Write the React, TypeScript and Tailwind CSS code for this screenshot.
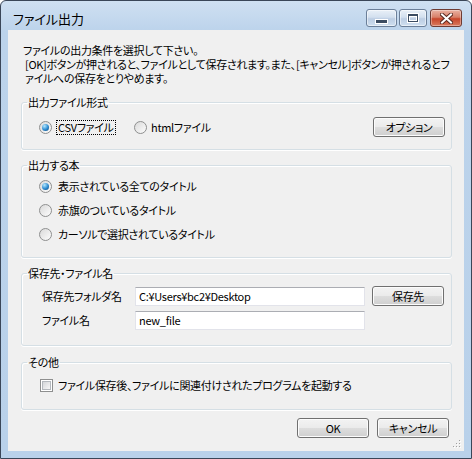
import React from 'react';

const jp = "font-['Noto_Sans_CJK_JP',sans-serif] [font-feature-settings:'palt']";

function Radio({ checked = false }: { checked?: boolean }) {
  return (
    <span className="flex h-[13px] w-[13px] shrink-0 items-center justify-center rounded-full border border-[#8e8f8f] bg-[linear-gradient(135deg,#d9d9d9,#fdfdfd)]">
      {checked && (
        <span className="h-[7px] w-[7px] rounded-full bg-[radial-gradient(circle_at_35%_30%,#b4e8ff,#2b8ad0_55%,#0c3f6e)]" />
      )}
    </span>
  );
}

function Checkbox() {
  return (
    <span className="flex h-[13px] w-[13px] shrink-0 items-center justify-center border border-[#8e8f8f] bg-white">
      <span className="h-[9px] w-[9px] border border-[#b4b8bd] bg-[linear-gradient(135deg,#d4d6d9,#f7f7f7)]" />
    </span>
  );
}

function Btn({ children }: { children: React.ReactNode }) {
  return (
    <button className="flex h-[20px] w-[72px] shrink-0 items-center justify-center rounded-[3px] border border-[#707070] bg-[linear-gradient(#f3f3f3_0%,#ebebeb_48%,#dddddd_52%,#cfcfcf_100%)] text-[11px] leading-none tracking-[-0.3px] text-black shadow-[inset_0_0_0_1px_#fcfcfc]">
      {children}
    </button>
  );
}

function Group({ title, className = '', children }: { title: string; className?: string; children: React.ReactNode }) {
  return (
    <fieldset className={`ml-[13px] mr-[12px] rounded-[3px] border border-[#d5dfe5] shadow-[0_1px_0_#ffffff,inset_1px_1px_0_#ffffff] ${className}`}>
      <legend className="ml-[5px] px-[1px] text-[11px] leading-[14px]">{title}</legend>
      {children}
    </fieldset>
  );
}

function TextBox({ value }: { value: string }) {
  return (
    <div className="flex h-[19px] w-[230px] shrink-0 items-center border border-[#e2e3ea] border-t-[#abadb3] bg-white px-[3px] leading-none">
      {value}
    </div>
  );
}

function CaptionButton({ kind }: { kind: 'min' | 'max' | 'close' }) {
  if (kind === 'close') {
    return (
      <div className="ml-[3px] flex h-[18px] w-[32px] items-center justify-center rounded-[3px] border border-[#6e3b33] bg-[linear-gradient(#eab2a3_0%,#d88069_45%,#c7462b_55%,#d97b5f_100%)] shadow-[inset_0_0_0_1px_rgba(255,255,255,0.35)]">
        <svg width="13" height="11" viewBox="0 0 13 11">
          <path d="M2 1.5 L11 9.5 M11 1.5 L2 9.5" stroke="#5a2a22" strokeWidth="4" strokeLinecap="square" />
          <path d="M2 1.5 L11 9.5 M11 1.5 L2 9.5" stroke="#ffffff" strokeWidth="2" strokeLinecap="square" />
        </svg>
      </div>
    );
  }
  return (
    <div
      className={`flex h-[18px] items-center justify-center rounded-[3px] border border-[#6b7f99] bg-[linear-gradient(#e9f0f8_0%,#d3e0ef_45%,#bccde3_55%,#cfdff0_100%)] shadow-[inset_0_0_0_1px_rgba(255,255,255,0.5)] ${
        kind === 'min' ? 'w-[31px]' : 'ml-[2px] w-[28px]'
      }`}
    >
      {kind === 'min' ? (
        <span className="mt-[6px] h-[3px] w-[11px] bg-[#3b4c62] shadow-[0_0_0_1px_#ffffff]" />
      ) : (
        <span className="h-[8px] w-[10px] border border-t-2 border-[#3b4c62] shadow-[0_0_0_1px_#ffffff,inset_0_0_0_1px_#ffffff]" />
      )}
    </div>
  );
}

export default function App() {
  return (
    <div className={`${jp} h-[459px] w-[472px] overflow-hidden text-black`}>
      <div className="flex h-[459px] w-[472px] flex-col rounded-t-[6px] border border-[#3a4658] bg-[linear-gradient(#cfe0f2,#bcd3eb_30px,#b9d1ea)]">
        {/* title bar */}
        <div className="flex h-[29px] shrink-0 items-start">
          <span className="ml-[12px] mt-[9px] text-[13px] leading-[18px]">ファイル出力</span>
          <div className="ml-auto mr-[9px] mt-[8px] flex">
            <CaptionButton kind="min" />
            <CaptionButton kind="max" />
            <CaptionButton kind="close" />
          </div>
        </div>

        {/* client area */}
        <div className="relative mx-[7px] h-[421px] shrink-0 bg-[#f0f0f0] text-[11px] tracking-[-0.3px]">
          <div className="ml-[15px] pt-[13px] leading-[14px] whitespace-nowrap">
            <p>ファイルの出力条件を選択して下さい。</p>
            <p className="ml-[2px]">
              [OK]ボタンが押されると、ファイルとして保存されます。また、[キャンセル]ボタンが押されるとフ
              <br />
              ァイルへの保存をとりやめます。
            </p>
          </div>

          <Group title="出力ファイル形式" className="mt-[10px]">
            <div className="mt-[8px] mb-[12px] flex h-[20px] items-center pl-[17px] pr-[6px]">
              <div className="flex w-[95px] shrink-0 items-center">
                <Radio checked />
                <span className="ml-[4px] border border-dotted border-black px-[1px] leading-[13px]">CSVファイル</span>
              </div>
              <Radio />
              <span className="ml-[4px]">htmlファイル</span>
              <div className="ml-auto">
                <Btn>オプション</Btn>
              </div>
            </div>
          </Group>

          <Group title="出力する本" className="mt-[8px]">
            <div className="mt-[2px] mb-[11px] pl-[17px]">
              {['表示されている全てのタイトル', '赤旗のついているタイトル', 'カーソルで選択されているタイトル'].map((t, i) => (
                <div key={t} className="flex h-[24px] items-center">
                  <Radio checked={i === 0} />
                  <span className="ml-[6px]">{t}</span>
                </div>
              ))}
            </div>
          </Group>

          <Group title="保存先・ファイル名" className="mt-[8px]">
            <div className="mt-[6px] mb-[15px] pl-[20px]">
              <div className="flex h-[20px] items-center">
                <span className="w-[93px] shrink-0">保存先フォルダ名</span>
                <TextBox value="C:¥Users¥bc2¥Desktop" />
                <div className="ml-[7px]">
                  <Btn>保存先</Btn>
                </div>
              </div>
              <div className="mt-[4px] flex h-[20px] items-center">
                <span className="w-[93px] shrink-0">ファイル名</span>
                <TextBox value="new_file" />
              </div>
            </div>
          </Group>

          <Group title="その他" className="mt-[9px]">
            <div className="mt-[6px] mb-[14px] flex h-[20px] items-center pl-[18px]">
              <Checkbox />
              <span className="ml-[5px]">ファイル保存後、ファイルに関連付けされたプログラムを起動する</span>
            </div>
          </Group>

          <div className="mt-[8px] flex justify-end gap-[8px] pr-[15px]">
            <Btn>OK</Btn>
            <Btn>キャンセル</Btn>
          </div>

          {/* size grip */}
          <svg className="absolute bottom-[2px] right-[2px]" width="10" height="10" viewBox="0 0 10 10">
            {[
              [7, 1],
              [4, 4],
              [7, 4],
              [1, 7],
              [4, 7],
              [7, 7],
            ].map(([x, y]) => (
              <g key={`${x}-${y}`}>
                <rect x={x + 1} y={y + 1} width="1" height="1" fill="#ffffff" />
                <rect x={x} y={y} width="1" height="1" fill="#a0a0a0" />
              </g>
            ))}
          </svg>
        </div>
      </div>
    </div>
  );
}
